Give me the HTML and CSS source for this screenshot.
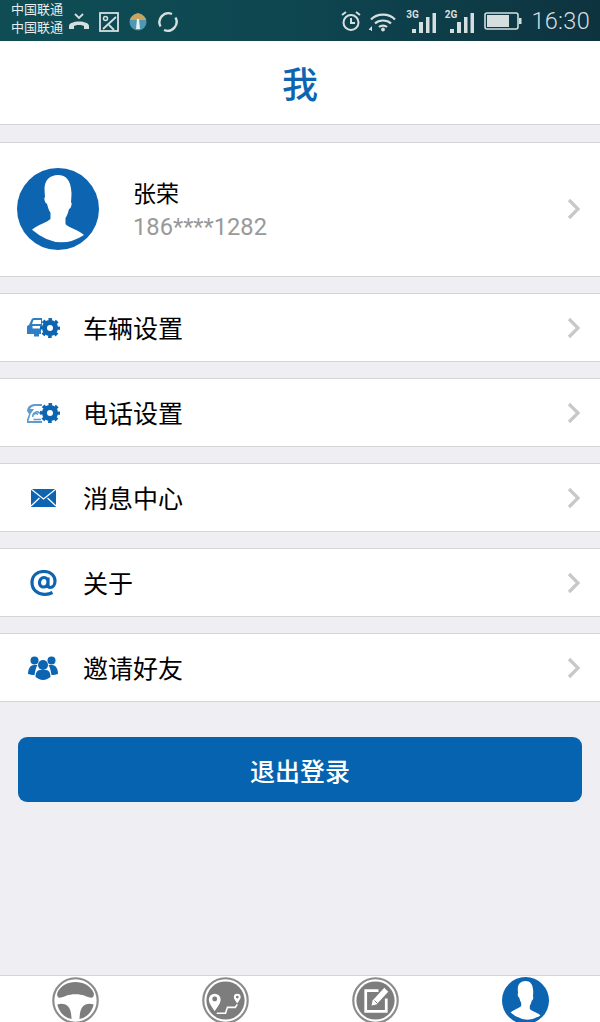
FILE: index.html
```html
<!DOCTYPE html>
<html lang="zh-CN">
<head>
  <meta charset="UTF-8" />
  <title>我</title>
  <meta name="viewport" content="width=device-width, initial-scale=1.0" />
  <link rel="stylesheet" href="styles.css">
</head>
<body>
  <svg class="defs" width="0" height="0" aria-hidden="true">
    <defs>
      <symbol id="bust" viewBox="0 0 82 82">
        <path d="M41 7C33 7 28 12 27.500 20c0 3 .3 6 .5 9-1 .5-.8 3 .2 5 .5 1 1 1.500 1.800 1.800 1 4 2 7 3.500 9v6c-2 2.500-7.500 4.500-12.500 7-2.500 1.200-4.500 2.500-6 4Q41 84 67 67c-1.500-1.500-3.500-2.800-6-4-5-2.500-10.500-4.500-12.500-7v-6c1.500-2 2.500-5 3.500-9 .8-.3 1.300-.8 1.800-1.800 1-2 1.200-4.500.2-5 .2-3 .5-6 .5-9C54 12 49 7 41 7z" fill="#fff"/>
      </symbol>
      <symbol id="gear" viewBox="0 0 20 20">
        <circle cx="10" cy="10" r="8.500" fill="none" stroke="#0d64b0" stroke-width="3" stroke-dasharray="3.500 3.175" stroke-dashoffset="1.750"/>
        <circle cx="10" cy="10" r="5.500" fill="none" stroke="#0d64b0" stroke-width="5"/>
      </symbol>
      <symbol id="chevron" viewBox="0 0 14 22">
        <path d="M2 2l9 9-9 9" fill="none" stroke="#c8c8ca" stroke-width="3.200"/>
      </symbol>
    </defs>
  </svg>

  <div class="status-bar">
    <div class="carriers">
      <span>中国联通</span>
      <span>中国联通</span>
    </div>
    <svg class="st-icon" width="22" height="18" viewBox="0 0 22 18">
      <path d="M7 1l4 4 4-4" fill="none" stroke="#d5dfe0" stroke-width="1.800"/>
      <path d="M1 13c0-6 20-6 20 0v3h-5v-3c-2-1.500-8-1.500-10 0v3H1z" fill="#d5dfe0"/>
    </svg>
    <svg class="st-icon st-pic" width="20" height="20" viewBox="0 0 20 20">
      <rect x="1" y="1" width="18" height="18" fill="none" stroke="#d5dfe0" stroke-width="1.800"/>
      <circle cx="6.500" cy="6.500" r="2" fill="none" stroke="#d5dfe0" stroke-width="1.500"/>
      <path d="M4 17L17 5M10 13l5 5" fill="none" stroke="#d5dfe0" stroke-width="1.800"/>
    </svg>
    <svg class="st-icon st-app" width="18" height="20" viewBox="0 0 18 20">
      <circle cx="9" cy="10" r="8.500" fill="#4f98b5"/>
      <path d="M1 8C2 4 6 2 9 1c3 1 7 3 8 7z" fill="#c9a45c"/>
      <path d="M8 7h2l1 10H7z" fill="#e8f0f0"/>
    </svg>
    <svg class="st-icon st-sync" width="22" height="22" viewBox="0 0 22 22">
      <path d="M3.500 15.500A9 9 0 0 1 15 3M18.500 6.500A9 9 0 0 1 7 19" fill="none" stroke="#d5dfe0" stroke-width="2.400"/>
    </svg>

    <div class="status-right">
      <svg width="22" height="22" viewBox="0 0 22 22">
        <circle cx="11" cy="12.500" r="7.500" fill="none" stroke="#d5dfe0" stroke-width="2"/>
        <path d="M11 8v5h4M2 5l4-3M20 5l-4-3" fill="none" stroke="#d5dfe0" stroke-width="2"/>
      </svg>
      <svg class="st-wifi" width="30" height="22" viewBox="0 0 30 22">
        <path d="M3 9.500c6-6.500 18-6.500 24 0M7 13.500c4-4 12-4 16 0M11 17c2-1.800 6-1.800 8 0" fill="none" stroke="#d5dfe0" stroke-width="2.200"/>
        <circle cx="15" cy="19.500" r="1.900" fill="#d5dfe0"/>
        <path d="M1 19l3-3v5H3v-1H1z" fill="#d5dfe0"/>
      </svg>
      <div class="signal"><span class="net">3G</span><svg width="25" height="22" viewBox="0 0 25 22"><path d="M0 17h4v4H0zM7 10h4v11H7zM14 5h3.500v16H14zM20.500 1H24v20h-3.500z" fill="#d5dfe0"/></svg></div>
      <div class="signal"><span class="net">2G</span><svg width="25" height="22" viewBox="0 0 25 22"><path d="M0 17h4v4H0zM7 10h4v11H7zM14 5h3.500v16H14zM20.500 1H24v20h-3.500z" fill="#d5dfe0"/></svg></div>
      <svg class="st-batt" width="38" height="20" viewBox="0 0 38 20">
        <rect x="1" y="2" width="33" height="16" rx="2" fill="none" stroke="#d5dfe0" stroke-width="1.600"/>
        <rect x="3" y="4" width="22" height="12" fill="#d5dfe0"/>
        <rect x="35" y="7" width="2.500" height="6" fill="#d5dfe0"/>
      </svg>
      <span class="clock">16:30</span>
    </div>
  </div>

  <header class="title-bar">
    <h1>我</h1>
  </header>

  <main class="content">
    <a class="profile">
      <svg class="avatar" width="82" height="82" viewBox="0 0 82 82">
        <circle cx="41" cy="41" r="41" fill="#0d64b0"/>
        <use href="#bust" width="82" height="82"/>
      </svg>
      <div class="profile-text">
        <div class="profile-name">张荣</div>
        <div class="profile-phone">186****1282</div>
      </div>
      <svg class="chevron" width="14" height="22"><use href="#chevron"/></svg>
    </a>

    <a class="row">
      <svg class="row-icon" width="34" height="24" viewBox="0 0 34 24">
        <path d="M3 9l2.500-5.500C6 2.500 7 2 8 2h8v8H6.500v2.500H15V18h-2v2.500H8V18H1v-7c0-1 .8-2 2-2z" fill="#2f7fc4"/>
        <path d="M6 8l1.500-4H15v4z" fill="#fff"/>
        <use href="#gear" x="14" y="2" width="20" height="20"/>
      </svg>
      <span class="row-label">车辆设置</span>
      <svg class="chevron" width="14" height="22"><use href="#chevron"/></svg>
    </a>

    <a class="row">
      <svg class="row-icon" width="34" height="24" viewBox="0 0 34 24">
        <path d="M1 10c0-4.500 4-7 8.500-7H16v2H9.500C7 5 5 6 4 8h4l-3.500 5L2.500 20H16v2H1v-3.500l2-5.500z" fill="#5f9dd0"/>
        <path d="M7 16a4 4 0 0 1 7-3.500M8 13.500a2.500 2.500 0 0 1 4 0M7.500 18.500H15" fill="none" stroke="#5f9dd0" stroke-width="1.500"/>
        <use href="#gear" x="14" y="2" width="20" height="20"/>
      </svg>
      <span class="row-label">电话设置</span>
      <svg class="chevron" width="14" height="22"><use href="#chevron"/></svg>
    </a>

    <a class="row">
      <svg class="row-icon" width="34" height="24" viewBox="0 0 34 24">
        <rect x="5" y="3" width="25" height="18" fill="#0d64b0"/>
        <path d="M5 3l12.500 10L30 3M5 20l8.500-8M30 20l-8.500-8" fill="none" stroke="#fff" stroke-width="1.200"/>
      </svg>
      <span class="row-label">消息中心</span>
      <svg class="chevron" width="14" height="22"><use href="#chevron"/></svg>
    </a>

    <a class="row">
      <svg class="row-icon" width="34" height="26" viewBox="0 0 34 26">
        <path d="M26.500 22.500c-2.800 1.500-5.500 2.100-8.500 1.800C11 24 6 19.500 6 12.500S11 1.500 18 1.500s11 4.500 11 9.500c0 4-2.300 6.500-4.800 6.500-1.500 0-2.200-1-2.200-2.500V7.500M22 12c0 3-2 5-4.500 5s-4-2-4-4.500 2-5 4.500-5 4 2 4 4.500z" fill="none" stroke="#0d64b0" stroke-width="3.200"/>
      </svg>
      <span class="row-label">关于</span>
      <svg class="chevron" width="14" height="22"><use href="#chevron"/></svg>
    </a>

    <a class="row">
      <svg class="row-icon" width="34" height="26" viewBox="0 0 34 26">
        <circle cx="8.500" cy="5.500" r="4" fill="#0d64b0"/>
        <circle cx="25.500" cy="5.500" r="4" fill="#0d64b0"/>
        <circle cx="17" cy="10" r="5" fill="#0d64b0"/>
        <path d="M2 19c0-5 2-9 6-9h3.500c-1.500 2-2 5-3 10-2.500 0-5-.5-6.500-1zM32 19c0-5-2-9-6-9h-3.500c1.500 2 2 5 3 10 2.500 0 5-.5 6.500-1z" fill="#0d64b0"/>
        <path d="M9.500 22c0-4 1.500-7 4.500-7h6c3 0 4.500 3 4.500 7-2 1.500-4.500 3-7.500 3s-5.500-1.500-7.500-3z" fill="#0d64b0"/>
      </svg>
      <span class="row-label">邀请好友</span>
      <svg class="chevron" width="14" height="22"><use href="#chevron"/></svg>
    </a>

    <button class="logout">退出登录</button>
  </main>

  <nav class="tabs">
    <svg width="47" height="47" viewBox="0 0 48 48">
      <circle cx="24" cy="24" r="22.700" fill="#fff" stroke="#8b8b8b" stroke-width="2.200"/>
      <path d="M5.500 16C8.500 9 16 5 24 5s15.500 4 18.500 11c1 3.500-1 5.500-3.500 5-4-1-7-3.500-15-3.500S13 20 9 21c-2.500.5-4.500-1.500-3.500-5z" fill="#7d7d7d"/>
      <path d="M5.500 28c4-1.500 8-.5 10.500 1.500 2.500 2.500 3 5 3.500 8l.5 5.500C12.500 41.500 7 35.500 5.500 28zM42.500 28c-4-1.500-8-.5-10.500 1.500-2.500 2.500-3 5-3.500 8L28 43c7.500-1.500 13-7.500 14.500-15z" fill="#7d7d7d"/>
    </svg>
    <svg width="47" height="47" viewBox="0 0 48 48">
      <circle cx="24" cy="24" r="22.700" fill="#fff" stroke="#8b8b8b" stroke-width="2.200"/>
      <circle cx="24" cy="24" r="19.500" fill="#7d7d7d"/>
      <path d="M13 35c-3-5-6-8-6-12a6 6 0 0 1 12 0c0 4-3 7-6 12z" fill="#fff"/>
      <circle cx="13" cy="22.500" r="2.500" fill="#7d7d7d"/>
      <path d="M36 27c-2-3-3.500-4.500-3.500-6.500a3.500 3.500 0 0 1 7 0c0 2-1.500 3.500-3.500 6.500z" fill="#fff"/>
      <circle cx="36" cy="20.500" r="1.400" fill="#7d7d7d"/>
      <path d="M15 37h9l2-6h8l2-3" fill="none" stroke="#fff" stroke-width="1.600"/>
    </svg>
    <svg width="47" height="47" viewBox="0 0 48 48">
      <circle cx="24" cy="24" r="22.700" fill="#fff" stroke="#8b8b8b" stroke-width="2.200"/>
      <circle cx="24" cy="24" r="19.500" fill="#7d7d7d"/>
      <path d="M27 14H14v21h21V22" fill="none" stroke="#fff" stroke-width="2.800"/>
      <path d="M20 29l1-5L33 11l4 4-12 13z" fill="#fff"/>
      <path d="M23 24l3 3" stroke="#7d7d7d" stroke-width="1"/>
    </svg>
    <svg width="47" height="47" viewBox="0 0 82 82">
      <circle cx="41" cy="41" r="41" fill="#0d64b0"/>
      <use href="#bust" width="82" height="82"/>
    </svg>
  </nav>
</body>
</html>
```

FILE: styles.css
```css
:root {
  --blue: #0d64b0;
  --line: #d4d4d8;
  --page: #eeeef3;
}

html,
body {
  height: 1022px;
  overflow: hidden;
}

body {
  margin: 0;
  display: flex;
  flex-direction: column;
  background-color: var(--page);
  font-family: "Roboto", "Noto Sans CJK SC", sans-serif;
  color: #000;
}

.defs {
  position: absolute;
}

/* status bar */
.status-bar {
  height: 41px;
  flex: none;
  display: flex;
  align-items: center;
  padding: 0 10px 0 11px;
  background: linear-gradient(90deg, #0f4d55 0%, #0e4650 50%, #0d333f 100%);
  color: #d5dfe0;
}

.carriers {
  display: flex;
  flex-direction: column;
  margin-top: -3px;
  font-size: 13px;
  line-height: 18px;
  color: #e6eeee;
}

.st-icon {
  margin-left: 5px;
  margin-top: 2px;
}

.st-pic {
  margin-left: 9px;
}

.st-app {
  margin-left: 10px;
}

.st-sync {
  margin-left: 10px;
}

.status-right {
  margin-left: auto;
  display: flex;
  align-items: center;
  gap: 6px;
}

.signal {
  display: flex;
  align-items: flex-end;
  height: 24px;
  margin-top: 3px;
  margin-left: 2px;
}

.signal svg {
  margin-left: -7px;
}

.net {
  align-self: flex-start;
  font-size: 10px;
  font-weight: 700;
  line-height: 10px;
}

.st-batt {
  margin-left: 3px;
}

.clock {
  margin-left: 3px;
  font-size: 23.5px;
  font-weight: 300;
  letter-spacing: 0.3px;
}

/* title */
.title-bar {
  height: 84px;
  flex: none;
  box-sizing: border-box;
  display: flex;
  align-items: center;
  justify-content: center;
  padding-top: 6px;
  background-color: #fff;
  border-bottom: 1px solid var(--line);
}

.title-bar h1 {
  margin: 0;
  font-size: 36px;
  font-weight: 500;
  line-height: 44px;
  color: var(--blue);
}

/* list */
.content {
  flex: 1;
  min-height: 0;
  padding-top: 17px;
}

.profile,
.row {
  display: flex;
  align-items: center;
  background-color: #fff;
  border-top: 1px solid var(--line);
  border-bottom: 1px solid var(--line);
}

.profile {
  height: 131px;
  padding: 0 19px 2px 17px;
}

.profile-text {
  margin-left: 34px;
  margin-top: 4px;
  flex: 1;
}

.profile-name {
  font-size: 23px;
  line-height: 32px;
}

.profile-phone {
  font-size: 23.7px;
  line-height: 32px;
  color: #999;
}

.row {
  height: 67px;
  margin-top: 16px;
  padding: 0 19px 0 26px;
}

.row-icon {
  flex: none;
}

.row-label {
  flex: 1;
  margin-left: 23px;
  padding-bottom: 2px;
  font-size: 25px;
}

.chevron {
  flex: none;
}

.logout {
  display: block;
  width: 564px;
  height: 65px;
  margin: 35px 18px 0;
  border: none;
  border-radius: 9px;
  background-color: #0563b0;
  color: #fff;
  font-family: inherit;
  font-size: 25px;
  font-weight: 500;
}

/* tab bar */
.tabs {
  height: 47px;
  flex: none;
  display: grid;
  grid-template-columns: repeat(4, 150px);
  justify-items: center;
  align-items: start;
  padding-top: 1px;
  box-sizing: border-box;
  overflow: hidden;
  background-color: #fff;
  border-top: 1px solid var(--line);
}
```
